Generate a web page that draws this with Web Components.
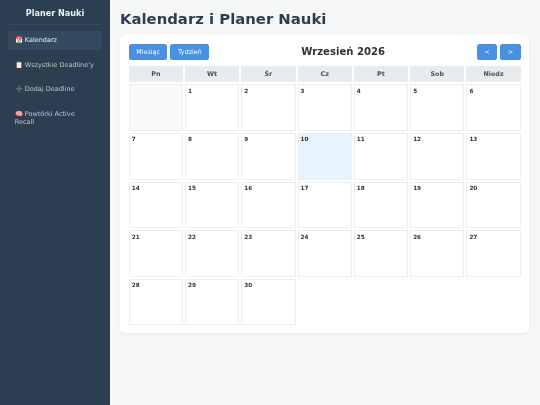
<!DOCTYPE html>
<html lang="pl">
<head>
<meta charset="utf-8">
<title>Planer Nauki</title>
<style>
  html, body { margin: 0; height: 100%; }
  body { font-family: "DejaVu Sans", sans-serif; background: #f5f6f6; }
</style>
</head>
<body>
<planner-app>
  <planner-sidebar slot="side">
    <nav-item active>📅 Kalendarz</nav-item>
    <nav-item>📋 Wszystkie Deadline'y</nav-item>
    <nav-item>➕ Dodaj Deadline</nav-item>
    <nav-item>🧠 Powtórki Active Recall</nav-item>
  </planner-sidebar>
  <h-title>Kalendarz i Planer Nauki</h-title>
  <month-calendar></month-calendar>
</planner-app>

<script>
class PlannerApp extends HTMLElement {
  constructor() {
    super();
    this.attachShadow({ mode: 'open' });
    this.shadowRoot.innerHTML = `
      <style>
        :host { display: flex; width: 540px; height: 405px; overflow: hidden; will-change: transform; }
        main { flex: 1; min-width: 0; padding: 10px 11px 0 10px; }
      </style>
      <slot name="side"></slot>
      <main><slot></slot></main>
    `;
  }
}

class PlannerSidebar extends HTMLElement {
  constructor() {
    super();
    this.attachShadow({ mode: 'open' });
    this.shadowRoot.innerHTML = `
      <style>
        :host { display: block; width: 110px; flex: none; box-sizing: border-box; height: 405px;
                background: #2c3e50; padding: 8px; }
        h2 { margin: 0 0 6px; padding: 0 0 5px; font-size: 8.1px; line-height: 11px; font-weight: bold;
             text-align: center; color: #ecf0f1; border-bottom: 1px solid #34495e; }
        .items { display: flex; flex-direction: column; gap: 6px; }
      </style>
      <h2>Planer Nauki</h2>
      <div class="items"><slot></slot></div>
    `;
  }
}

class NavItem extends HTMLElement {
  constructor() {
    super();
    this.attachShadow({ mode: 'open' });
    this.shadowRoot.innerHTML = `
      <style>
        :host { display: block; padding: 5.25px 6.7px; border-radius: 3px; font-size: 6.5px; line-height: 8px; color: #bdc3c7; }
        :host([active]) { background: #34495e; color: #ecf0f1; }
      </style>
      <slot></slot>
    `;
  }
}

class HTitle extends HTMLElement {
  constructor() {
    super();
    this.attachShadow({ mode: 'open' });
    this.shadowRoot.innerHTML = `
      <style>
        :host { display: block; margin-bottom: 7px; font-size: 14.85px; line-height: 18px; font-weight: bold; color: #2c3e50; }
      </style>
      <slot></slot>
    `;
  }
}

class ToolButton extends HTMLElement {
  constructor() {
    super();
    this.attachShadow({ mode: 'open' });
    this.shadowRoot.innerHTML = `
      <style>
        :host { display: flex; align-items: center; justify-content: center; height: 16px; padding: 0 7.5px;
                background: #4a90e2; color: #fff; border-radius: 2.5px; font-size: 6.4px; }
      </style>
      <slot></slot>
    `;
  }
}

class MonthCalendar extends HTMLElement {
  constructor() {
    super();
    this.attachShadow({ mode: 'open' });
    const days = ['Pn', 'Wt', 'Śr', 'Cz', 'Pt', 'Sob', 'Niedz'];
    const head = days.map(d => `<div class="head">${d}</div>`).join('');
    let cells = '<div class="day blank"></div>';
    for (let i = 1; i <= 30; i++) {
      cells += `<div class="day${i === 10 ? ' today' : ''}">${i}</div>`;
    }
    this.shadowRoot.innerHTML = `
      <style>
        :host { display: block; box-sizing: border-box; height: 298.4px; padding: 8.7px 8.3px 8px 8.7px;
                background: #fff; border-radius: 5px; box-shadow: 0 1px 3px rgba(0,0,0,.05); }
        .bar { display: flex; justify-content: space-between; align-items: center; margin-bottom: 6.3px; }
        .group { display: flex; gap: 3px; }
        h3 { margin: 0; font-size: 10.1px; font-weight: bold; color: #333; }
        .grid { display: grid; grid-template-columns: repeat(7, 1fr); gap: 2px; }
        .head { height: 16.4px; line-height: 16.4px; text-align: center; background: #e9ecef; font-size: 6.4px; font-weight: bold; color: #495057; }
        .day { box-sizing: border-box; height: 46.6px; padding: 2.4px 2px; border: 1px solid #eee;
               background: #fff; font-size: 5.7px; line-height: 7px; font-weight: bold; color: #333; }
        .blank { background: #f9f9f9; }
        .today { background: #e8f4fd; }
      </style>
      <div class="bar">
        <div class="group"><tool-button>Miesiąc</tool-button><tool-button>Tydzień</tool-button></div>
        <h3>Wrzesień 2026</h3>
        <div class="group"><tool-button>&lt;</tool-button><tool-button>&gt;</tool-button></div>
      </div>
      <div class="grid">${head}${cells}</div>
    `;
  }
}

customElements.define('planner-app', PlannerApp);
customElements.define('planner-sidebar', PlannerSidebar);
customElements.define('nav-item', NavItem);
customElements.define('h-title', HTitle);
customElements.define('tool-button', ToolButton);
customElements.define('month-calendar', MonthCalendar);
</script>
</body>
</html>
